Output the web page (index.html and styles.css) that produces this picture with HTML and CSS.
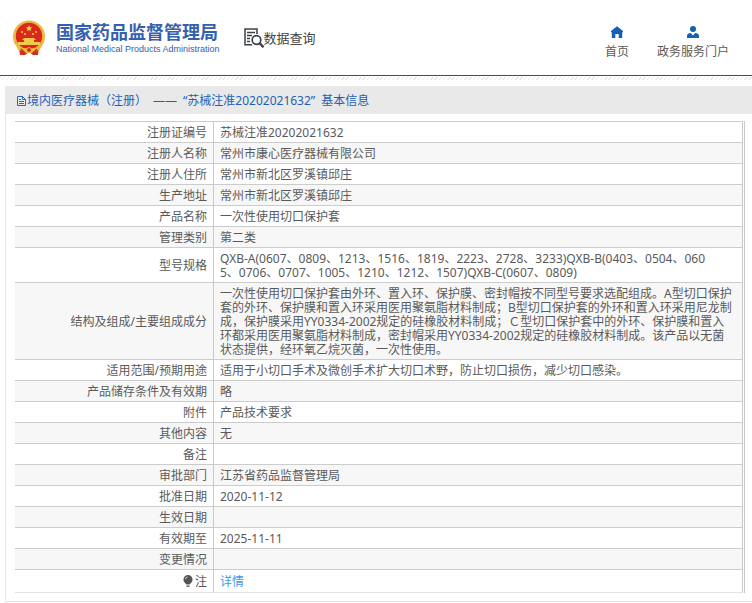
FILE: index.html
```html
<!DOCTYPE html>
<html lang="zh-CN">
<head>
<meta charset="utf-8">
<title>国家药品监督管理局 数据查询</title>
<link rel="stylesheet" href="styles.css">
</head>
<body>
<header class="site-header">
  <a class="brand" href="#">
    <svg class="emblem" viewBox="0 0 34 36" aria-hidden="true">
      <path d="M7 28L8 35H13L17 32L21 35H26L27 28Z" fill="#d3301c"/>
      <circle cx="17" cy="16.500" r="16" fill="#e9b840"/>
      <circle cx="17" cy="16" r="13.200" fill="#dc2819"/>
      <path d="M17 5l.9 2.300 2.400.1-1.900 1.500.7 2.400-2.100-1.400-2.100 1.400.7-2.400-1.900-1.500 2.400-.1z" fill="#f7d552"/>
      <g fill="#f7d552"><circle cx="10" cy="12" r="1"/><circle cx="13" cy="14" r="1"/><circle cx="21" cy="14" r="1"/><circle cx="24" cy="12" r="1"/></g>
      <path d="M12 18h10l2 2h-2v2h6v3H6v-3h6v-2h-2z" fill="#f3c948"/>
      <path d="M5 27q12 3 24 0l-1 3q-6 0-8 3h-6q-2-3-8-3z" fill="#edbd42"/>
      <path d="M9 29l4 4M25 29l-4 4" stroke="#d3301c" stroke-width="1.500"/>
      <circle cx="17" cy="30" r="2.500" fill="#dc2819" stroke="#f3c948"/>
    </svg>
    <span class="brand-text">
      <span class="brand-cn">国家药品监督管理局</span>
      <span class="brand-en">National Medical Products Administration</span>
    </span>
  </a>
  <a class="query" href="#">
    <svg class="query-icon" viewBox="0 0 20 20" fill="none" stroke="#3d4045" aria-hidden="true">
      <path d="M8 16.800H1V1h12v5" stroke-width="1.500"/>
      <path d="M3 4.500h8M3 7.500h5M3 10.500h3M3 13.500h3" stroke-width="1.300"/>
      <circle cx="12.500" cy="12" r="4.300" stroke-width="1.700"/>
      <path d="M15.500 15l4 4.300" stroke-width="2.400"/>
    </svg>
    <span>数据查询</span>
  </a>
  <nav class="site-nav">
    <a href="#">
      <svg viewBox="0 0 12 12" fill="#1260b8" aria-hidden="true"><path d="M6 .3L0 5v1.200h.8V12h3.500V8h3.400v4h3.500V6.200h.8V5z"/></svg>
      <span>首页</span>
    </a>
    <a href="#">
      <svg viewBox="0 0 12 12" fill="#1260b8" aria-hidden="true"><circle cx="6" cy="3" r="3"/><path d="M0 12V10Q0 7.300 3.800 7L6 9.500 8.200 7Q12 7.300 12 10v2z"/></svg>
      <span>政务服务门户</span>
    </a>
  </nav>
</header>
<div class="hatch"></div>
<main class="panel">
  <h1 class="panel-title">
    <span class="panel-kind"><svg viewBox="0 0 11 12" fill="none" stroke="#2868b8" aria-hidden="true"><path d="M1.500 1.500H6.500L9.500 4.500V10.500H1.500ZM6.500 1.500V4.500H9.500M3 6.500H8M3 8.500H8M3 4.500H5"/></svg>境内医疗器械（注册）</span>
    <span>——</span>
    <span>“苏械注准20202021632”</span>
    <span>基本信息</span>
  </h1>
  <div class="panel-body">
    <table class="info">
      <tbody>
        <tr><th scope="row">注册证编号</th><td>苏械注准20202021632</td></tr>
        <tr><th scope="row">注册人名称</th><td>常州市康心医疗器械有限公司</td></tr>
        <tr><th scope="row">注册人住所</th><td>常州市新北区罗溪镇邱庄</td></tr>
        <tr><th scope="row">生产地址</th><td>常州市新北区罗溪镇邱庄</td></tr>
        <tr><th scope="row">产品名称</th><td>一次性使用切口保护套</td></tr>
        <tr><th scope="row">管理类别</th><td>第二类</td></tr>
        <tr><th scope="row">型号规格</th><td>QXB-A(0607、0809、1213、1516、1819、2223、2728、3233)QXB-B(0403、0504、060<br>5、0706、0707、1005、1210、1212、1507)QXB-C(0607、0809)</td></tr>
        <tr><th scope="row">结构及组成/主要组成成分</th><td>一次性使用切口保护套由外环、置入环、保护膜、密封帽按不同型号要求选配组成。A型切口保护<br>套的外环、保护膜和置入环采用医用聚氨脂材料制成；B型切口保护套的外环和置入环采用尼龙制<br>成，保护膜采用YY0334-2002规定的硅橡胶材料制成；Ｃ型切口保护套中的外环、保护膜和置入<br>环都采用医用聚氨脂材料制成，密封帽采用YY0334-2002规定的硅橡胶材料制成。该产品以无菌<br>状态提供，经环氧乙烷灭菌，一次性使用。</td></tr>
        <tr><th scope="row">适用范围/预期用途</th><td>适用于小切口手术及微创手术扩大切口术野，防止切口损伤，减少切口感染。</td></tr>
        <tr><th scope="row">产品储存条件及有效期</th><td>略</td></tr>
        <tr><th scope="row">附件</th><td>产品技术要求</td></tr>
        <tr><th scope="row">其他内容</th><td>无</td></tr>
        <tr><th scope="row">备注</th><td></td></tr>
        <tr><th scope="row">审批部门</th><td>江苏省药品监督管理局</td></tr>
        <tr><th scope="row">批准日期</th><td>2020-11-12</td></tr>
        <tr><th scope="row">生效日期</th><td></td></tr>
        <tr><th scope="row">有效期至</th><td>2025-11-11</td></tr>
        <tr><th scope="row">变更情况</th><td></td></tr>
        <tr class="note"><th scope="row"><svg viewBox="0 0 10 12" aria-hidden="true"><path d="M5 0a4.600 4.600 0 0 0-3 8l1.500 1.500h3L8 8A4.600 4.600 0 0 0 5 0z" fill="#555"/><path d="M3.500 10.500h3v1.500h-3z" fill="#666"/><path d="M2.300 4Q2.800 2.300 4.500 2" stroke="#ddd" fill="none"/></svg>注</th><td><a href="#">详情</a></td></tr>
      </tbody>
    </table>
  </div>
</main>
</body>
</html>
```
FILE: styles.css
```css
* {
  box-sizing: border-box;
}

body {
  margin: 0;
  background: #fff;
  color: #5a5a5a;
  font: 12px/14px "Noto Sans", "Noto Sans CJK SC", sans-serif;
}

a {
  color: inherit;
  text-decoration: none;
}

svg {
  display: block;
  flex: none;
}

.site-header {
  display: flex;
  align-items: center;
  height: 76px;
  padding: 1px 23px 0 12px;
  border-bottom: 1px solid #1d5588;
}

.hatch {
  height: 3px;
  margin-top: 1px;
  background: repeating-linear-gradient(135deg, #e6e6e6 0 1px, #fff 1px 3px);
}

.brand {
  display: flex;
  align-items: center;
  gap: 10px;
}

.emblem {
  width: 34px;
  height: 36px;
}

.brand-text {
  display: flex;
  flex-direction: column;
  color: #3560ad;
  white-space: nowrap;
}

.brand-cn {
  font: bold 18px/22px "Noto Sans CJK SC", sans-serif;
}

.brand-en {
  font: 9px/14px "Liberation Sans", sans-serif;
}

.query {
  display: flex;
  align-items: center;
  margin-left: 24px;
  color: #444;
  font: 13px/20px "Noto Sans CJK SC", sans-serif;
}

.query-icon {
  width: 20px;
  height: 20px;
}

.site-nav {
  display: flex;
  gap: 28px;
  margin-left: auto;
  padding-top: 8px;
}

.site-nav a {
  display: flex;
  flex-direction: column;
  align-items: center;
  gap: 7px;
}

.site-nav svg {
  width: 12px;
  height: 12px;
}

.panel {
  margin: 6px 0 0 5px;
  border-bottom: 1px solid #e4e4e4;
  border-left: 1px solid #e9e9e9;
}

.panel-title {
  display: flex;
  align-items: center;
  gap: 6px;
  height: 28px;
  margin: 0;
  padding: 2px 10px 0;
  background: #e9e9e9;
  color: #1f5fb4;
  font-size: 12px;
  font-weight: normal;
  white-space: nowrap;
}

.panel-kind {
  display: flex;
  align-items: center;
}

.panel-title svg {
  width: 11px;
  height: 12px;
}

.panel-body {
  padding: 7px 7px 8px 9px;
}

.info {
  width: 100%;
  border-collapse: separate;
  border-spacing: 0;
  border-right: 1px solid #c8c8cc;
  padding-right: 1px;
}

.info th,
.info td {
  height: 21px;
  padding: 4px 6px 2px;
  border-top: 1px solid #ccc;
  border-right: 1px solid #c8c8cc;
  font-weight: normal;
}

.info th {
  width: 199px;
  text-align: right;
}

.info td {
  text-align: left;
  white-space: nowrap;
}

.info tr:nth-child(even) {
  background: #f7f7f7;
}

.info .note th,
.info .note td {
  height: 24px;
  border-bottom: 1px solid #e4e4e4;
}

.note svg {
  display: inline-block;
  width: 10px;
  height: 12px;
  margin-right: 2px;
  vertical-align: -1px;
}

.note a {
  color: #4495e8;
}
```
